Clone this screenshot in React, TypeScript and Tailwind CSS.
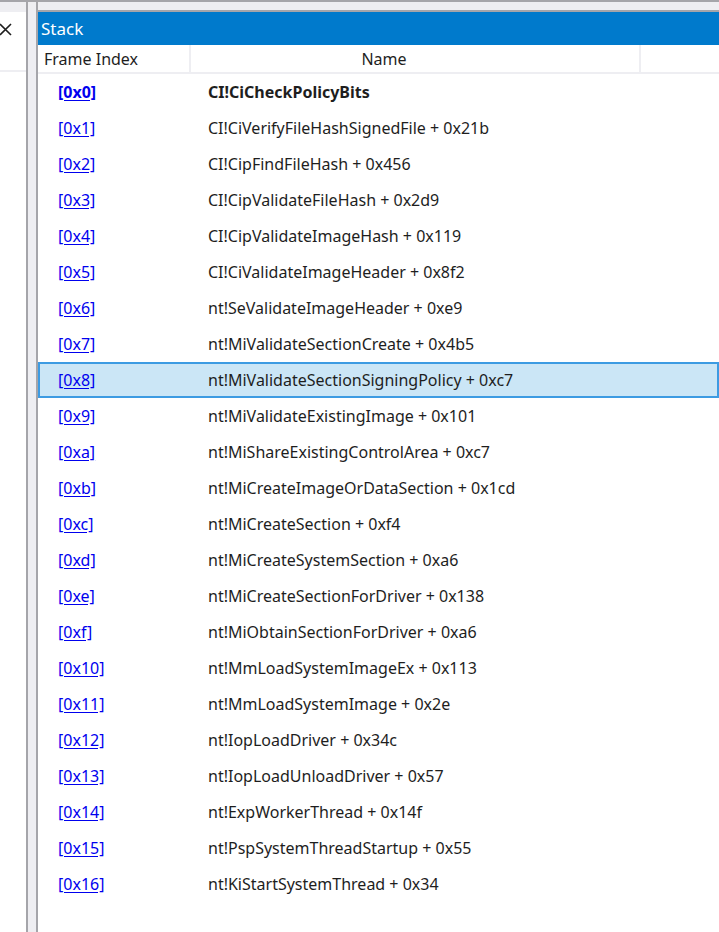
const frames = [
  ["[0x0]", "CI!CiCheckPolicyBits"],
  ["[0x1]", "CI!CiVerifyFileHashSignedFile + 0x21b"],
  ["[0x2]", "CI!CipFindFileHash + 0x456"],
  ["[0x3]", "CI!CipValidateFileHash + 0x2d9"],
  ["[0x4]", "CI!CipValidateImageHash + 0x119"],
  ["[0x5]", "CI!CiValidateImageHeader + 0x8f2"],
  ["[0x6]", "nt!SeValidateImageHeader + 0xe9"],
  ["[0x7]", "nt!MiValidateSectionCreate + 0x4b5"],
  ["[0x8]", "nt!MiValidateSectionSigningPolicy + 0xc7"],
  ["[0x9]", "nt!MiValidateExistingImage + 0x101"],
  ["[0xa]", "nt!MiShareExistingControlArea + 0xc7"],
  ["[0xb]", "nt!MiCreateImageOrDataSection + 0x1cd"],
  ["[0xc]", "nt!MiCreateSection + 0xf4"],
  ["[0xd]", "nt!MiCreateSystemSection + 0xa6"],
  ["[0xe]", "nt!MiCreateSectionForDriver + 0x138"],
  ["[0xf]", "nt!MiObtainSectionForDriver + 0xa6"],
  ["[0x10]", "nt!MmLoadSystemImageEx + 0x113"],
  ["[0x11]", "nt!MmLoadSystemImage + 0x2e"],
  ["[0x12]", "nt!IopLoadDriver + 0x34c"],
  ["[0x13]", "nt!IopLoadUnloadDriver + 0x57"],
  ["[0x14]", "nt!ExpWorkerThread + 0x14f"],
  ["[0x15]", "nt!PspSystemThreadStartup + 0x55"],
  ["[0x16]", "nt!KiStartSystemThread + 0x34"],
];

const SELECTED = 8;

export default function App() {
  return (
    <div
      className="flex h-[932px] w-[719px] overflow-hidden border-t-2 border-[#a5a5aa] bg-[#eeeef2] text-[16px] text-[#1e1e1e]"
      style={{ fontFamily: '"Noto Sans", "Open Sans", sans-serif' }}
    >
      {/* left docked panel (cut off) */}
      <div className="flex w-[28px] shrink-0 flex-col border-r-2 border-[#a5a5aa] pt-[10px]">
        <div className="flex flex-1 flex-col bg-white">
          <div className="h-[60px] border-b-2 border-[#eeeef2] pt-[11px]">
            <svg width="13" height="13" viewBox="0 0 13 13" className="-ml-[1px]">
              <path d="M1 1 L12 12 M12 1 L1 12" stroke="#1e1e1e" strokeWidth="1.6" fill="none" />
            </svg>
          </div>
        </div>
      </div>

      <div className="w-[8px] shrink-0" />

      {/* stack panel */}
      <div className="flex min-w-0 flex-1 flex-col border-l-2 border-[#a5a5aa] pt-[8px]">
        <div className="flex flex-1 flex-col border-t-2 border-[#a5a5aa] bg-white">
          <div className="flex h-[33px] items-center bg-[#007acc] pl-[3px] text-[17px] text-white">
            Stack
          </div>

          {/* header */}
          <div className="flex h-[29px] items-center border-b-2 border-[#eeeef2]">
            <div className="flex h-full w-[153px] items-center border-r-2 border-[#eeeef2] pl-[6px]">
              Frame Index
            </div>
            <div className="flex h-full w-[450px] items-center justify-center border-r-2 border-[#eeeef2] pr-[62px]">
              Name
            </div>
            <div className="flex-1" />
          </div>

          {/* rows */}
          <div className="flex flex-col">
            {frames.map(([idx, name], i) => (
              <div
                key={idx}
                className={
                  i === SELECTED
                    ? "flex h-[36px] items-center border-2 border-[#3d9be2] bg-[#cbe6f6]"
                    : "flex h-[36px] items-center border-2 border-transparent"
                }
              >
                <div className="w-[168px] shrink-0 pl-[18px]">
                  <span
                    className={
                      i === 0
                        ? "font-bold text-[#0000ee] underline underline-offset-2"
                        : "text-[#0000ee] underline underline-offset-2"
                    }
                  >
                    {idx}
                  </span>
                </div>
                <div className={i === 0 ? "font-bold" : ""}>{name}</div>
              </div>
            ))}
          </div>
        </div>
      </div>
    </div>
  );
}
